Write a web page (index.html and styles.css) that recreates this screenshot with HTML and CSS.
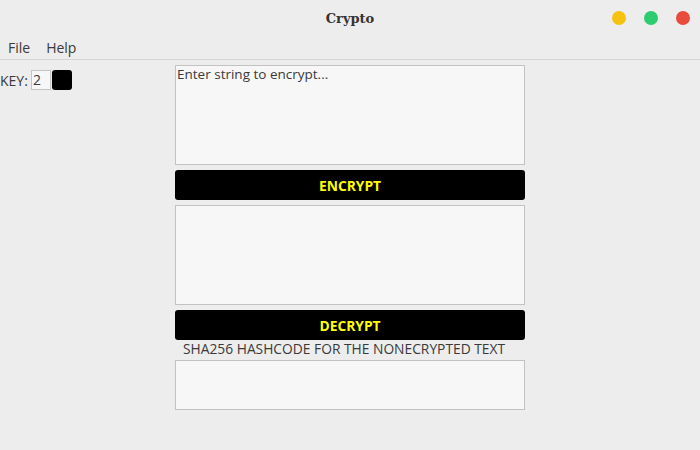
FILE: index.html
```html
<!DOCTYPE html>
<html>
<head>
<meta charset="utf-8">
<link rel="stylesheet" href="styles.css">
</head>
<body>
<div class="window">
  <div class="titlebar">
    <div class="title">Crypto</div>
    <div class="controls">
      <span class="dot yellow"></span>
      <span class="dot green"></span>
      <span class="dot red"></span>
    </div>
  </div>
  <div class="menubar">
    <span class="menu-item">File</span>
    <span class="menu-item">Help</span>
  </div>
  <div class="content">
    <div class="side">
      <div class="key-row">
        <span class="key-label">KEY:</span>
        <span class="key-input">2</span>
        <span class="key-color"></span>
      </div>
    </div>
    <div class="column">
      <div class="textbox big">Enter string to encrypt...</div>
      <div class="btn">ENCRYPT</div>
      <div class="textbox big"></div>
      <div class="btn">DECRYPT</div>
      <div class="label">SHA256 HASHCODE FOR THE NONECRYPTED TEXT</div>
      <div class="textbox small"></div>
    </div>
  </div>
</div>
</body>
</html>
```
FILE: styles.css
```css
html, body {
  margin: 0;
  padding: 0;
  background: #ededed;
}
.window {
  width: 700px;
  height: 450px;
  background: #ededed;
  font-family: "Open Sans", "Noto Sans", sans-serif;
  font-size: 13.5px;
  color: #3a3a3a;
}
.titlebar {
  height: 36px;
  display: flex;
  align-items: center;
  justify-content: center;
  position: relative;
}
.title {
  font-family: "DejaVu Serif", serif;
  font-weight: bold;
  font-size: 13px;
  color: #333;
}
.controls {
  position: absolute;
  right: 10px;
  top: 11px;
  display: flex;
  gap: 18px;
}
.dot {
  width: 14px;
  height: 14px;
  border-radius: 50%;
  display: block;
}
.yellow { background: #f5c211; }
.green { background: #2ecc71; }
.red { background: #e74c3c; }
.menubar {
  height: 23px;
  border-bottom: 1px solid #d4d4d4;
  display: flex;
  align-items: center;
  gap: 16px;
  padding-left: 8px;
  font-size: 14px;
}
.content {
  display: grid;
  grid-template-columns: 175px 350px;
}
.side {
  padding-top: 10px;
}
.key-row {
  display: flex;
  align-items: center;
  height: 20px;
}
.key-label {
  width: 31px;
  font-size: 14px;
}
.key-input {
  width: 18px;
  height: 18px;
  border: 1px solid #c4c4c4;
  background: #f7f7f7;
  line-height: 18px;
  text-indent: 1px;
  font-size: 14px;
}
.key-color {
  width: 20px;
  height: 20px;
  margin-left: 1px;
  background: #000;
  border-radius: 3px;
}
.column {
  padding-top: 5px;
  display: flex;
  flex-direction: column;
}
.textbox {
  box-sizing: border-box;
  width: 350px;
  border: 1px solid #c2c2c2;
  background: #f7f7f7;
  padding: 0 1px;
  line-height: 16px;
}
.big { height: 100px; }
.small { height: 50px; }
.btn {
  height: 30px;
  margin: 5px 0;
  background: #000;
  border-radius: 3px;
  color: #ffff00;
  font-weight: bold;
  font-size: 13.8px;
  display: flex;
  align-items: center;
  justify-content: center;
}
.btn + .label { margin-top: -5px; }
.label {
  height: 20px;
  padding-left: 8px;
  line-height: 18px;
  font-size: 13.8px;
}
```
